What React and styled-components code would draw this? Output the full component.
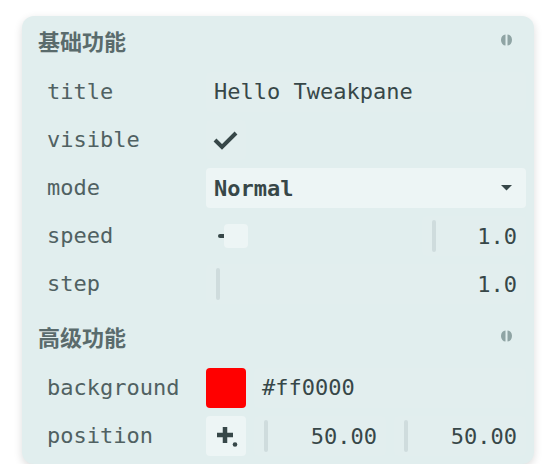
import React from 'react'
import styled, { createGlobalStyle } from 'styled-components'

const GlobalStyle = createGlobalStyle`
  *, *::before, *::after {
    box-sizing: border-box;
  }
  body {
    margin: 0;
    background: #ffffff;
    font-family: "DejaVu Sans Mono", monospace;
  }
`

const Page = styled.div`
  padding: 16px 0 0 22px;
`

const Pane = styled.div`
  width: 512px;
  background: #e1eeee;
  border-radius: 12px;
  box-shadow: 0 3px 8px rgba(0, 0, 0, 0.14);
  overflow: hidden;
`

const FolderHeader = styled.div`
  height: 48px;
  display: flex;
  align-items: center;
  justify-content: space-between;
  padding: 0 22px 0 16px;
  color: #5a6b6c;
  font-family: "Noto Sans CJK SC", sans-serif;
  font-weight: 700;
  font-size: 22px;
`

const FolderBody = styled.div`
  display: flex;
  flex-direction: column;
  gap: 8px;
  padding: 8px;
  background: rgba(255, 255, 255, 0.03);
`

const Row = styled.div`
  display: grid;
  grid-template-columns: 176px 1fr;
  height: 40px;
  align-items: center;
`

const Label = styled.div`
  padding-left: 17px;
  color: #506162;
  font-size: 22px;
  line-height: 40px;
`

const Field = styled.div`
  height: 40px;
  display: flex;
  align-items: center;
  gap: 8px;
  min-width: 0;
`

const TextBox = styled.div`
  flex: 1;
  height: 40px;
  border-radius: 4px;
  padding: 0 8px;
  background: rgba(255, 255, 255, 0.035);
  color: #374748;
  font-size: 22px;
  line-height: 40px;
  white-space: nowrap;
`

const CheckBox = styled.div`
  width: 40px;
  height: 40px;
  border-radius: 4px;
  background: rgba(255, 255, 255, 0.035);
  display: flex;
  align-items: center;
  justify-content: center;
`

const Select = styled.div`
  flex: 1;
  height: 40px;
  border-radius: 4px;
  background: #edf5f5;
  display: flex;
  align-items: center;
  justify-content: space-between;
  padding: 0 14px 0 8px;
  color: #374748;
  font-weight: 700;
  font-size: 22px;
`

const Slider = styled.div`
  flex: 1;
  height: 40px;
  position: relative;
  border-radius: 4px;
  background: rgba(255, 255, 255, 0.025);
`

const Fill = styled.div`
  position: absolute;
  left: 12px;
  top: 18px;
  height: 4px;
  border-radius: 2px 0 0 2px;
  background: #374748;
`

const Knob = styled.div`
  position: absolute;
  top: 8px;
  width: 24px;
  height: 24px;
  border-radius: 4px;
  background: #edf5f5;
`

const NumberBox = styled.div`
  flex: ${(p) => (p.$width ? `0 0 ${p.$width}px` : '1')};
  height: 40px;
  border-radius: 4px;
  background: rgba(255, 255, 255, 0.035);
  display: flex;
  align-items: center;
  padding: 0 9px 0 10px;
  color: #374748;
  font-size: 22px;
`

const Divider = styled.div`
  width: 4px;
  height: 32px;
  border-radius: 2px;
  background: #cfdcdd;
`

const Num = styled.span`
  margin-left: auto;
`

const Swatch = styled.div`
  width: 40px;
  height: 40px;
  border-radius: 4px;
  background: ${(p) => p.$color};
  flex: none;
`

const PadButton = styled.div`
  width: 40px;
  height: 40px;
  border-radius: 4px;
  background: #edf5f5;
  flex: none;
`

const FoldMark = () => (
  <svg width="11" height="12" viewBox="0 0 11 12">
    <path d="M4.5 0.5 A4.5 5.5 0 0 0 4.5 11.5 Z" fill="#8fa4a4" />
    <path d="M6.5 0.5 A4.5 5.5 0 0 1 6.5 11.5 Z" fill="#8fa4a4" />
  </svg>
)

const Folder = ({ title, children }) => (
  <>
    <FolderHeader>
      <span>{title}</span>
      <FoldMark />
    </FolderHeader>
    <FolderBody>{children}</FolderBody>
  </>
)

const NumberField = ({ value, width }) => (
  <NumberBox $width={width}>
    <Divider />
    <Num>{value}</Num>
  </NumberBox>
)

export default function App() {
  const speed = 1
  const fillWidth = 6 * speed

  return (
    <Page>
      <GlobalStyle />
      <Pane>
        <Folder title="基础功能">
          <Row>
            <Label>title</Label>
            <Field>
              <TextBox>Hello Tweakpane</TextBox>
            </Field>
          </Row>
          <Row>
            <Label>visible</Label>
            <Field>
              <CheckBox>
                <svg width="26" height="20" viewBox="0 0 26 20">
                  <path d="M2 10 L9 17 L23 3" fill="none" stroke="#374748" strokeWidth="4" />
                </svg>
              </CheckBox>
            </Field>
          </Row>
          <Row>
            <Label>mode</Label>
            <Field>
              <Select>
                <span>Normal</span>
                <svg width="11" height="6" viewBox="0 0 11 6">
                  <path d="M0 0 H11 L5.5 5.5 Z" fill="#374748" />
                </svg>
              </Select>
            </Field>
          </Row>
          <Row>
            <Label>speed</Label>
            <Field>
              <Slider>
                <Fill style={{ width: fillWidth }} />
                <Knob style={{ left: 12 + fillWidth }} />
              </Slider>
              <NumberField value="1.0" width={104} />
            </Field>
          </Row>
          <Row>
            <Label>step</Label>
            <Field>
              <NumberField value="1.0" />
            </Field>
          </Row>
        </Folder>
        <Folder title="高级功能">
          <Row>
            <Label>background</Label>
            <Field>
              <Swatch $color="#ff0000" />
              <TextBox>#ff0000</TextBox>
            </Field>
          </Row>
          <Row>
            <Label>position</Label>
            <Field>
              <PadButton>
                <svg width="40" height="40" viewBox="0 0 40 40">
                  <path d="M11 19 H27 M19 11 V27" stroke="#374748" strokeWidth="4.5" />
                  <circle cx="29" cy="28.5" r="2.3" fill="#374748" />
                </svg>
              </PadButton>
              <NumberField value="50.00" />
              <NumberField value="50.00" />
            </Field>
          </Row>
        </Folder>
      </Pane>
    </Page>
  )
}
